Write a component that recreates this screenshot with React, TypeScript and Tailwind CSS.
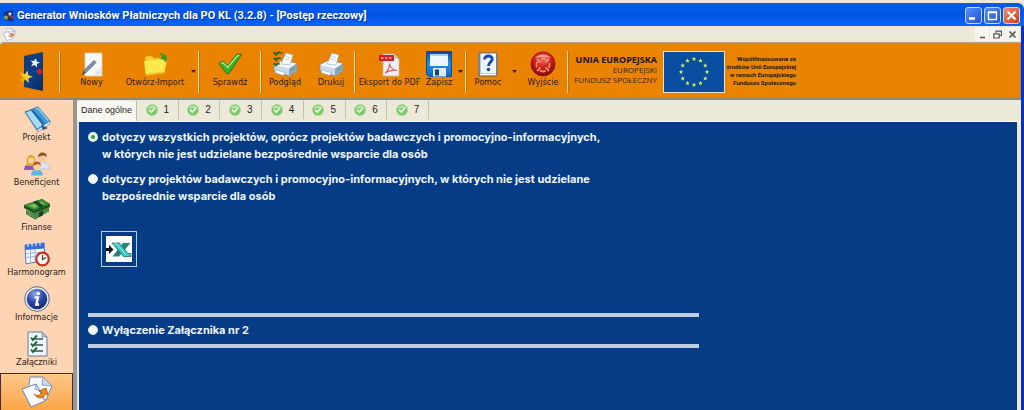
import { useState } from "react";
import type { ReactNode } from "react";

const labelFont = "font-['DejaVu_Sans_Condensed','DejaVu_Sans',sans-serif]";

const STAR = "M0 -5 L1.3 -1.7 L4.8 -1.6 L2 0.6 L3 4 L0 2 L-3 4 L-2 0.6 L-4.8 -1.6 L-1.3 -1.7 Z";

/* ---------- toolbar icons ---------- */

function LogoIcon() {
    return (
        <svg width="26" height="42" viewBox="0 0 26 42" aria-hidden="true">
            <defs>
                <linearGradient id="door" x1="0" y1="0" x2="1" y2="1">
                    <stop offset="0" stopColor="#123a78" />
                    <stop offset="0.5" stopColor="#0d3f86" />
                    <stop offset="1" stopColor="#082a60" />
                </linearGradient>
            </defs>
            <path d="M5 5 L24 1 V40 L5 36 Z" fill="url(#door)" />
            <path d={STAR} transform="translate(16 12) rotate(12)" fill="#f2f5fb" />
            <path d={STAR} transform="translate(20.500 20.500) rotate(-14) scale(.85)" fill="#d8232c" />
            <path d={STAR} transform="translate(7 26) rotate(14) scale(1.35)" fill="#fbd22b" />
            <path d="M2 27 L7 26 L4 32 Z" fill="#f6a21c" />
        </svg>
    );
}

function NewIcon() {
    return (
        <svg width="26" height="26" viewBox="0 0 26 26" aria-hidden="true">
            <path d="M6 2 H23 V25 H6 Z" fill="#f7f8f8" stroke="#d9d2c2" strokeWidth="0.8" />
            <path d="M14 25 H23 V14 Z" fill="#e4e8ea" />
            <path d="M15 9.500 L17 11.500 L6.500 22 L4.500 20 Z" fill="#7894b5" stroke="#4c5e74" strokeWidth="0.8" />
            <path d="M4.500 20 L6.500 22 L2.500 24.500 Z" fill="#4c4b4b" />
        </svg>
    );
}

function OpenIcon() {
    return (
        <svg width="26" height="26" viewBox="0 0 26 26" aria-hidden="true">
            <path d="M3 7 L4 5 H10 L12 7 H22 L23 9 V22 H3 Z" fill="#f5cf2d" stroke="#d9a514" strokeWidth="0.7" />
            <path d="M2 10 L19 8.500 L25 10 L22 22 L4 24.500 Z" fill="#ffe94e" />
            <path d="M4 23 L22 20.500 L21.700 22.200 L4.300 24.700 Z" fill="#f2bf1d" />
            <path d="M17 1 L25 5 L24 12 L21.500 8.500 L18 8 L20 5.500 Z" fill="#3a9822" />
        </svg>
    );
}

function CheckIcon() {
    return (
        <svg width="26" height="26" viewBox="0 0 26 26" aria-hidden="true">
            <path d="M2 12.500 L6 10 L10.500 15 L20 3 L24.500 3.500 L12 22.500 H9.500 Z" fill="#3fae2a" stroke="#1f7b18" strokeWidth="1" />
            <path d="M4 12.700 L6 11.500 L10.500 16.500 L20.500 4.500 L22.500 4.600" fill="none" stroke="#a9ec7d" strokeWidth="1.3" />
        </svg>
    );
}

function PrinterIcon({ preview = false }: { preview?: boolean }) {
    return (
        <svg width="26" height="26" viewBox="0 0 26 26" aria-hidden="true">
            <path d="M2 14 L9 10 L24 12 L25 20 L17 25 L2 20 Z" fill="#c9d9ec" stroke="#7088a8" strokeWidth="0.7" />
            <path d="M2 14 L17 17.500 L24.500 12.500 L10 10 Z" fill="#f5f9fd" />
            <path d="M17 17.500 V25 L25 20 L24.500 12.500 Z" fill="#8da6c6" />
            <path d="M9 13 L14 2 L21 4 L18 14 Z" fill="#fff" stroke="#8fb3d8" strokeWidth="0.7" />
            <path d="M14 5.500 L18.500 6.800 M13 8 L17.800 9.200" stroke="#a8c8e6" strokeWidth="0.8" />
            <path d="M4 19 L14 21.800 L11 24.500 L3 21.500 Z" fill="#fdfeff" stroke="#88a8c8" strokeWidth="0.6" />
            <path d="M19 19.500 L23 17" stroke="#49b75a" strokeWidth="1.2" />
            {preview && (
                <g fill="none">
                    <path d="M1 2 H11 M1 7.500 H9 M1 13 H8" stroke="#51340b" strokeWidth="1.2" />
                    <path d="M2 1.500 L4 4 L8 0.500 M2 7 L4 9.500 L7 6 M2 12.500 L4 14.500 L7 11.500" stroke="#2c6b18" strokeWidth="1.7" />
                </g>
            )}
        </svg>
    );
}

function PdfIcon() {
    return (
        <svg width="26" height="26" viewBox="0 0 26 26" aria-hidden="true">
            <path d="M6 3 H17 L22 8 V25 H6 Z" fill="#f1f1f3" stroke="#bdb6ad" strokeWidth="0.8" />
            <path d="M17 3 V8 H22 Z" fill="#c9cbd2" />
            <rect x="2" y="4" width="15" height="6" fill="#d21f22" />
            <path d="M4 7 H15" fill="none" stroke="#ee8f8c" strokeWidth="2" strokeDasharray="2.500 1.500" />
            <path d="M8 22 C11 20 13 15 12.500 12.500 C13 16 16 19 20 19.500 C16 18.500 12 19.500 8 22 Z" fill="none" stroke="#dd5a55" strokeWidth="1.2" />
        </svg>
    );
}

function SaveIcon() {
    return (
        <svg width="26" height="26" viewBox="0 0 26 26" aria-hidden="true">
            <defs>
                <linearGradient id="disk" x1="0" y1="0" x2="0" y2="1">
                    <stop offset="0" stopColor="#0a4a9c" />
                    <stop offset="0.5" stopColor="#2291e4" />
                    <stop offset="1" stopColor="#1268bd" />
                </linearGradient>
            </defs>
            <path d="M0.500 0.500 H25.500 V25.500 H3 L0.500 23 Z" fill="url(#disk)" stroke="#0c4a92" />
            <rect x="4" y="3" width="18" height="12" fill="#edf6fd" />
            <rect x="4" y="3" width="18" height="2" fill="#9fd2f5" />
            <rect x="7" y="17" width="13" height="8.500" fill="#dfe9f2" />
            <rect x="9" y="18.500" width="4" height="6" fill="#164a86" />
        </svg>
    );
}

function HelpIcon() {
    return (
        <svg width="26" height="26" viewBox="0 0 26 26" aria-hidden="true">
            <path d="M4 2 H21 L22 3 V24 L20 25 H4 Z" fill="#6d9bd1" stroke="#3e67a0" strokeWidth="0.8" />
            <path d="M5.500 2.500 H21 V22 H5.500 Z" fill="#eef5fc" />
            <path d="M5 22.500 H21 V24.300 H5 Z" fill="#fff" />
            <path d="M9.500 8.500 C9.500 3.800 17.500 4 17.200 8.300 C17 11 13.500 11.300 13.500 15" fill="none" stroke="#174bb5" strokeWidth="2.9" />
            <circle cx="13.500" cy="18.500" r="1.800" fill="#174bb5" />
        </svg>
    );
}

function ExitIcon() {
    return (
        <svg width="26" height="26" viewBox="0 0 26 26" aria-hidden="true">
            <defs>
                <radialGradient id="exit" cx="0.500" cy="0.300" r="0.700">
                    <stop offset="0" stopColor="#f0705a" />
                    <stop offset="0.500" stopColor="#cf1f17" />
                    <stop offset="1" stopColor="#7d0a08" />
                </radialGradient>
            </defs>
            <circle cx="13" cy="13" r="12" fill="url(#exit)" stroke="#a01410" />
            <circle cx="13" cy="14" r="6.500" fill="none" stroke="#f08a74" strokeWidth="1.800" strokeDasharray="6.200 4" strokeDashoffset="3" />
            <path d="M7 8 L10.500 11.500 M19 8 L15.500 11.500 M7 20 L10.500 16.500 M19 20 L15.500 16.500" stroke="#f5a48e" strokeWidth="1.600" />
            <path d="M5 7 C8 2.500 18 2.500 21 7 C17 5.500 9 5.500 5 7 Z" fill="#f7a594" />
        </svg>
    );
}

function EuFlag() {
    const stars = Array.from({ length: 12 }, (_, i) => (i * Math.PI) / 6);
    return (
        <svg width="62" height="42" viewBox="0 0 62 42" role="img" aria-label="Flaga Unii Europejskiej">
            <rect x="0.500" y="0.500" width="61" height="41" fill="#0a4ea2" stroke="#e6e3cf" />
            {stars.map((a) => (
                <path key={a} d={STAR} transform={`translate(${31 + 13 * Math.sin(a)} ${21 - 13 * Math.cos(a)}) scale(.48)`} fill="#d9ef6a" />
            ))}
        </svg>
    );
}

/* ---------- sidebar icons ---------- */

function ProjectIcon() {
    return (
        <svg width="28" height="26" viewBox="0 0 28 26" aria-hidden="true">
            <path d="M2 6 L15 1 L27 15 L14 24 Z" fill="#3f9bd8" stroke="#1c5d98" strokeWidth="0.8" />
            <path d="M3 6.500 L8 4.500 L19.500 19 L14 22.500 Z" fill="#a8dcf6" />
            <path d="M8 4.500 L10 3.700 L22 17.500 L19.500 19 Z" fill="#1d6cad" />
            <path d="M13 3 L15 2.300 L25.500 15" fill="none" stroke="#8fcff2" strokeWidth="1.500" />
            <path d="M14 24 L27 15 V18 L15 25.700 Z" fill="#eaf5fc" stroke="#31689c" strokeWidth="0.600" />
            <path d="M18 19 L25 22 L20 24 Z" fill="#384e7a" />
        </svg>
    );
}

function PeopleIcon() {
    return (
        <svg width="28" height="26" viewBox="0 0 28 26" aria-hidden="true">
            <path d="M1 19 C1 11 13 11 13 19 Z" fill="#8c58b8" />
            <path d="M4 15 C2 5 7 4 8 4 C12 4 13 8 11.500 15 Z" fill="#e8a61f" />
            <circle cx="8" cy="9.500" r="3" fill="#fbd3ab" />
            <path d="M13 18 C13 9 26 9 27 18 Z" fill="#dfe6f2" stroke="#9aa8c0" strokeWidth="0.500" />
            <circle cx="19.500" cy="6.500" r="4.300" fill="#f6c79d" />
            <path d="M15 6 C15 0 24 0 24 6 C21 3.500 18 4.500 15 6 Z" fill="#8a4b1f" />
            <path d="M8 24.500 C8 16 20 16 20 24.500 Z" fill="#5bb9e8" />
            <circle cx="14" cy="15.500" r="3.900" fill="#fbd0a2" />
            <path d="M10 15 C10 9 18 9 18 15 C16 12.500 13 13 10 15 Z" fill="#a85c22" />
        </svg>
    );
}

function MoneyIcon() {
    return (
        <svg width="28" height="26" viewBox="0 0 28 26" aria-hidden="true">
            <path d="M1 9 L19 3 L27 8 V11 L11 18 L1 12 Z" fill="#1c5a22" />
            <path d="M1 9 L19 3 L27 8 L11 14 Z" fill="#3f8e3a" />
            <path d="M6 9.500 L18 5.500 L22 8 L11 12 Z" fill="#82bd5b" />
            <path d="M10 6 L14 4.600 L21 10 L17 11.700 Z" fill="#174c1f" />
            <path d="M3 14 L11 18.500 L26 11.500 V15.500 L12 23.500 L3 18 Z" fill="#1f6427" />
            <path d="M3 15.500 L11.500 20.300 L26 13 M4 17.500 L12 22 L26 14.800" fill="none" stroke="#86bf74" strokeWidth="0.800" />
            <path d="M16 16.500 L20 14.500 V19 L16 21.200 Z" fill="#113f18" />
        </svg>
    );
}

function ScheduleIcon() {
    return (
        <svg width="28" height="26" viewBox="0 0 28 26" aria-hidden="true">
            <path d="M2 4 L21 2 L22 19 L3 23 Z" fill="#f4f8ff" stroke="#5777c4" />
            <path d="M2 4 L21 2 L21.300 7.500 L2.300 9 Z" fill="#3969d2" />
            <path d="M5 1.500 V6 M9 1.200 V5.500 M13 0.800 V5 M17 0.500 V4.500" stroke="#c7d8fa" strokeWidth="1.400" />
            <path d="M3 12.500 L21 11 M3 16.500 L15 15 M7.500 9 V22 M12 8.500 V20" stroke="#9db7ea" strokeWidth="1" />
            <circle cx="19.500" cy="18" r="6.300" fill="#fdf4ee" stroke="#c43120" strokeWidth="2.200" />
            <path d="M19.500 14 V18.500 L23 16.500" fill="none" stroke="#3c3c3c" strokeWidth="1.200" />
        </svg>
    );
}

function InfoIcon() {
    return (
        <svg width="28" height="26" viewBox="0 0 28 26" aria-hidden="true">
            <defs>
                <radialGradient id="info" cx="0.400" cy="0.250" r="0.800">
                    <stop offset="0" stopColor="#8fa8e4" />
                    <stop offset="0.500" stopColor="#2e4db0" />
                    <stop offset="1" stopColor="#15246b" />
                </radialGradient>
            </defs>
            <circle cx="14" cy="13" r="12.300" fill="#eef0f6" stroke="#4f5878" strokeWidth="0.900" />
            <circle cx="14" cy="13" r="10.300" fill="url(#info)" />
            <circle cx="15.300" cy="7.500" r="1.800" fill="#fff" />
            <path d="M11.500 11.300 H15 L13.300 18.500 H16" fill="none" stroke="#fff" strokeWidth="2.300" />
        </svg>
    );
}

function AttachmentsIcon() {
    return (
        <svg width="28" height="26" viewBox="0 0 28 26" aria-hidden="true">
            <path d="M5 1 H19 L24 6 V25 H5 Z" fill="#edf5fa" stroke="#5f7f9c" />
            <path d="M19 1 V6 H24 Z" fill="#b4cbdc" stroke="#5f7f9c" strokeWidth="0.700" />
            <path d="M10 8 H20 M10 14 H20 M10 20 H20" stroke="#3c5548" strokeWidth="1.500" />
            <path d="M8 6.500 L10 9 L14 4.500 M8 12.500 L10 15 L14 10.500 M8 18.500 L10 21 L14 16.500" fill="none" stroke="#23653c" strokeWidth="1.900" />
        </svg>
    );
}

function ProgressIcon({ size }: { size: number }) {
    return (
        <svg width={size} height={size} viewBox="0 0 32 32" aria-hidden="true">
            <path d="M9 1 L22 1 L31 10 L25 24 L7 16 Z" fill="#f4f8ff" stroke="#7189bd" />
            <path d="M22 1 L21 9 L31 10 Z" fill="#cbdaf3" stroke="#7189bd" strokeWidth="0.700" />
            <path d="M1 13 L15 8 L24 25 L10 31 Z" fill="#fbfdff" stroke="#6d82b4" />
            <path d="M15 8 L14 13 L19 15 Z" fill="#d2def4" stroke="#6d82b4" strokeWidth="0.700" />
            <path d="M13 18 C17 21 20 19 20.500 16 L18 15 L25 12 L27 19 L24.500 17.500 C23 23 17 23.500 13 18 Z" fill="#f38a1b" stroke="#b34f10" strokeWidth="0.800" />
        </svg>
    );
}

function TabTick() {
    return (
        <svg width="12" height="12" viewBox="0 0 12 12" aria-hidden="true">
            <circle cx="6" cy="6" r="5.500" fill="#78c965" stroke="#a9d49c" strokeWidth="0.700" />
            <path d="M1.500 4.500 C3 0.500 9 0.500 10.500 4.500 Z" fill="#b0e69f" />
            <path d="M3 5.800 L5.400 8 L9 4" fill="none" stroke="#f4fff0" strokeWidth="1.600" />
        </svg>
    );
}

function ExcelIcon() {
    return (
        <svg width="26" height="26" viewBox="0 0 26 26" aria-hidden="true">
            <rect width="26" height="26" fill="#fff" />
            <path d="M0 12 H3 V9 L7.500 13.500 L3 18 V15 H0 Z" fill="#111" />
            <path d="M17 7 H24.500 L13 20.500 H6.500 Z" fill="#2b8078" />
            <path d="M6 7 H13.500 L22 17.500 H25 V20.500 H17.500 Z" fill="#39c6c4" stroke="#17605f" strokeWidth="0.700" />
            <path d="M8 8 H11 L20.500 19.500" fill="none" stroke="#8deeea" strokeWidth="1" />
        </svg>
    );
}

/* ---------- building blocks ---------- */

function ToolButton({ label, width, children }: { label: string; width: string; children: ReactNode }) {
    return (
        <button type="button" className={`${width} flex shrink-0 flex-col items-center whitespace-nowrap text-[9px] leading-[11px] text-[#33200a]`}>
            {children}
            <span>{label}</span>
        </button>
    );
}

function DropArrow({ label }: { label: string }) {
    return (
        <button type="button" aria-label={label} className="flex h-10 w-[10px] shrink-0 items-center justify-center">
            <svg width="5" height="3" viewBox="0 0 5 3" aria-hidden="true">
                <path d="M0 0 H5 L2.500 3 Z" fill="#3c2204" />
            </svg>
        </button>
    );
}

function Separator() {
    return <div className="h-[42px] w-[2px] shrink-0 border-l border-[#f7dcae] bg-[#c77407]" />;
}

const sideItems = [
    { label: "Projekt", icon: <ProjectIcon /> },
    { label: "Beneficjent", icon: <PeopleIcon /> },
    { label: "Finanse", icon: <MoneyIcon /> },
    { label: "Harmonogram", icon: <ScheduleIcon /> },
    { label: "Informacje", icon: <InfoIcon /> },
    { label: "Załączniki", icon: <AttachmentsIcon /> },
];

const options = [
    {
        id: "all",
        lines: [
            "dotyczy wszystkich projektów, oprócz projektów badawczych i promocyjno-informacyjnych,",
            "w których nie jest udzielane bezpośrednie wsparcie dla osób",
        ],
    },
    {
        id: "research",
        lines: [
            "dotyczy projektów badawczych i promocyjno-informacyjnych, w których nie jest udzielane",
            "bezpośrednie wsparcie dla osób",
        ],
    },
];

const radioClass =
    "mt-[3px] size-[10px] shrink-0 appearance-none rounded-full border border-[#dfe9f2] bg-[#f4f8f8] checked:border-3 checked:border-[#e4f0ea] checked:bg-[#3c9a48]";

function TitleBar() {
    const frame = "flex size-[17px] items-center justify-center rounded-[3px] border border-[#c9d8fa]";
    return (
        <header className="flex h-[23px] items-center justify-between rounded-tr-md bg-linear-to-b from-[#0a5ce0] via-[#0055e6] to-[#0a66fb] pt-[2px] pr-1 pl-[3px]">
            <div className="flex items-center gap-[3px]">
                <svg width="11" height="12" viewBox="0 0 11 12" aria-hidden="true">
                    <path d="M1 2 L10 0.500 V11.500 L1 10 Z" fill="#13316d" />
                    <path d={STAR} transform="translate(7 4) scale(.5)" fill="#dfe9fb" />
                    <path d={STAR} transform="translate(8.500 7) scale(.5)" fill="#d8232c" />
                    <path d={STAR} transform="translate(3 7.500) scale(.6)" fill="#9fc84a" />
                </svg>
                <h1 className="font-['Roboto','Noto_Sans',sans-serif] text-[11px] leading-4 font-bold whitespace-nowrap text-white [text-shadow:1px_1px_0_#0a2f8c]">
                    Generator Wniosków Płatniczych dla PO KL (3.2.8) - [Postęp rzeczowy]
                </h1>
            </div>
            <div className="flex gap-[2px]">
                <button type="button" aria-label="Minimalizuj" className={`${frame} bg-linear-to-br from-[#5a8cf4] to-[#1c50d8]`}>
                    <svg width="11" height="11" viewBox="0 0 11 11"><path d="M1 8.500 H7" stroke="#fff" strokeWidth="2.500" /></svg>
                </button>
                <button type="button" aria-label="Maksymalizuj" className={`${frame} bg-linear-to-br from-[#5a8cf4] to-[#1c50d8]`}>
                    <svg width="11" height="11" viewBox="0 0 11 11"><path d="M1.500 2 H9.500 V9.500 H1.500 Z M1 2.500 H10" fill="none" stroke="#fff" strokeWidth="1.300" /></svg>
                </button>
                <button type="button" aria-label="Zamknij" className={`${frame} bg-linear-to-br from-[#f08a6c] to-[#cf3a14]`}>
                    <svg width="11" height="11" viewBox="0 0 11 11"><path d="M1.500 1.500 L9.500 9.500 M9.500 1.500 L1.500 9.500" stroke="#fff" strokeWidth="2" /></svg>
                </button>
            </div>
        </header>
    );
}

function MenuBar() {
    const cell = "flex h-[14px] w-[14px] items-center justify-center bg-[#f6f5ef]";
    return (
        <div className="flex h-4 items-center justify-between bg-[#ece9d8] pr-[2px] pl-[3px]">
            <ProgressIcon size={13} />
            <div className="flex gap-px">
                <button type="button" aria-label="Minimalizuj okno" className={cell}>
                    <svg width="9" height="9" viewBox="0 0 9 9"><path d="M2 7.500 H7" stroke="#55564f" strokeWidth="1.500" /></svg>
                </button>
                <button type="button" aria-label="Przywróć okno" className={cell}>
                    <svg width="9" height="9" viewBox="0 0 9 9"><path d="M3 3 V1.200 H8.500 V5.500 H6.500 M0.800 3.800 H6.200 V8 H0.800 Z" fill="none" stroke="#55564f" strokeWidth="1.200" /></svg>
                </button>
                <button type="button" aria-label="Zamknij okno" className={cell}>
                    <svg width="9" height="9" viewBox="0 0 9 9"><path d="M1.500 1.500 L7.500 7.500 M7.500 1.500 L1.500 7.500" stroke="#55564f" strokeWidth="1.700" /></svg>
                </button>
            </div>
        </div>
    );
}

function Toolbar() {
    return (
        <div className={`${labelFont} flex h-[58px] items-start overflow-hidden rounded-tl-sm border-t border-r border-b-2 border-t-[#b9a27c] border-r-[#8f8778] border-b-[#8f8778] bg-[#e98300] pt-2`}>
            <div className="flex w-[59px] shrink-0 justify-center pl-1"><LogoIcon /></div>
            <Separator />
            <ToolButton label="Nowy" width="w-[61px]"><NewIcon /></ToolButton>
            <ToolButton label="Otwórz-Import" width="w-[66px]"><OpenIcon /></ToolButton>
            <DropArrow label="Otwórz-Import: więcej" />
            <Separator />
            <ToolButton label="Sprawdź" width="w-[60px]"><CheckIcon /></ToolButton>
            <Separator />
            <ToolButton label="Podgląd" width="w-[46px]"><PrinterIcon preview /></ToolButton>
            <ToolButton label="Drukuj" width="w-[46px]"><PrinterIcon /></ToolButton>
            <Separator />
            <ToolButton label="Eksport do PDF" width="w-[67px]"><PdfIcon /></ToolButton>
            <ToolButton label="Zapisz" width="w-[32px]"><SaveIcon /></ToolButton>
            <DropArrow label="Zapisz: więcej" />
            <Separator />
            <ToolButton label="Pomoc" width="w-[42px]"><HelpIcon /></ToolButton>
            <DropArrow label="Pomoc: więcej" />
            <ToolButton label="Wyjście" width="w-[48px]"><ExitIcon /></ToolButton>
            <Separator />
            <div className="flex w-[88px] shrink-0 flex-col items-end pt-1 font-['Open_Sans','Noto_Sans',sans-serif] text-[8px] leading-[10px] whitespace-nowrap text-[#3d2306]">
                <strong className="text-[9px] font-bold text-[#1d1206]">UNIA EUROPEJSKA</strong>
                <span>EUROPEJSKI</span>
                <span>FUNDUSZ SPOŁECZNY</span>
            </div>
            <div className="shrink-0 pl-[6px]"><EuFlag /></div>
            <p className="flex w-[71px] shrink-0 flex-col items-end pt-1 font-['Roboto','Noto_Sans',sans-serif] text-[6px] leading-2 font-bold whitespace-nowrap text-[#2b1803]">
                <span>Współfinansowane ze</span>
                <span>środków Unii Europejskiej</span>
                <span>w ramach Europejskiego</span>
                <span>Funduszu Społecznego</span>
            </p>
        </div>
    );
}

function Sidebar() {
    return (
        <nav className={`${labelFont} flex w-[73px] shrink-0 flex-col bg-[#fdd5b5] pt-[3px] text-[9px] leading-[11px] text-[#1f1a18]`}>
            {sideItems.map((item) => (
                <button key={item.label} type="button" className="flex h-[45px] shrink-0 flex-col items-center pt-[3px] whitespace-nowrap">
                    {item.icon}
                    <span>{item.label}</span>
                </button>
            ))}
            <button type="button" aria-current="page" aria-label="Postęp rzeczowy" className="flex flex-1 justify-center border border-b-0 border-[#43294f] bg-linear-to-b from-[#fdc888] to-[#fba544] pt-[2px]">
                <ProgressIcon size={32} />
            </button>
        </nav>
    );
}

function Tabs() {
    return (
        <div role="tablist" className="flex h-[21px] items-stretch bg-[#ece9d8] font-['Liberation_Sans',Arial,sans-serif] text-[10px] text-[#1f1f1f]">
            <button type="button" role="tab" aria-selected="true" className="mt-px w-[59px] rounded-t-sm bg-[#f8f7f1] text-[9px] whitespace-nowrap">
                Dane ogólne
            </button>
            <div className="grid w-[293px] grid-cols-7 border-l border-[#c5c2b2]">
                {[1, 2, 3, 4, 5, 6, 7].map((n) => (
                    <button key={n} type="button" role="tab" aria-selected="false" className="mb-[2px] flex items-center justify-center gap-[6px] border-r border-[#c5c2b2]">
                        <TabTick />
                        {n}
                    </button>
                ))}
            </div>
        </div>
    );
}

function ProgressPanel() {
    const [selected, setSelected] = useState("all");

    return (
        <div className="flex-1 bg-[#063c86] pt-[7px] pl-[9px] font-['Inter','Liberation_Sans',sans-serif] text-[11px] leading-[17px] font-bold text-[#eef6ff]">
            <fieldset className="flex flex-col gap-2">
                {options.map((option) => (
                    <label key={option.id} className="flex gap-1 whitespace-nowrap">
                        <input type="radio" name="scope" className={radioClass} checked={selected === option.id} onChange={() => setSelected(option.id)} />
                        <span className="flex flex-col">
                            {option.lines.map((line) => (
                                <span key={line}>{line}</span>
                            ))}
                        </span>
                    </label>
                ))}
            </fieldset>
            <button type="button" aria-label="Importuj z Excela" className="mt-[26px] ml-[13px] flex size-9 items-center justify-center border border-[#b9cfe8]">
                <ExcelIcon />
            </button>
            <div className="mt-[46px] max-w-[611px] border-y-4 border-[#c3cde0] py-[5px]">
                <label className="flex gap-1">
                    <input type="radio" name="scope" className={radioClass} checked={selected === "excluded"} onChange={() => setSelected("excluded")} />
                    <span>Wyłączenie Załącznika nr 2</span>
                </label>
            </div>
        </div>
    );
}

export default function App() {
    return (
        <div className="flex h-screen min-w-[800px] flex-col overflow-hidden bg-[#ece9d8] pt-[3px]">
            <TitleBar />
            <div className="flex min-h-0 flex-1 flex-col border-r-[3px] border-[#0a2fc0]">
                <MenuBar />
                <Toolbar />
                <div className="flex min-h-0 flex-1">
                    <Sidebar />
                    <main className="flex min-w-0 flex-1 flex-col border-l-4 border-[#9a968c] bg-[#ece9d8]">
                        <Tabs />
                        <div className="flex min-h-0 flex-1 border-t border-r-4 border-l-2 border-t-white border-r-[#ece9d8] border-l-[#dfe6ee]">
                            <ProgressPanel />
                        </div>
                    </main>
                </div>
            </div>
        </div>
    );
}
